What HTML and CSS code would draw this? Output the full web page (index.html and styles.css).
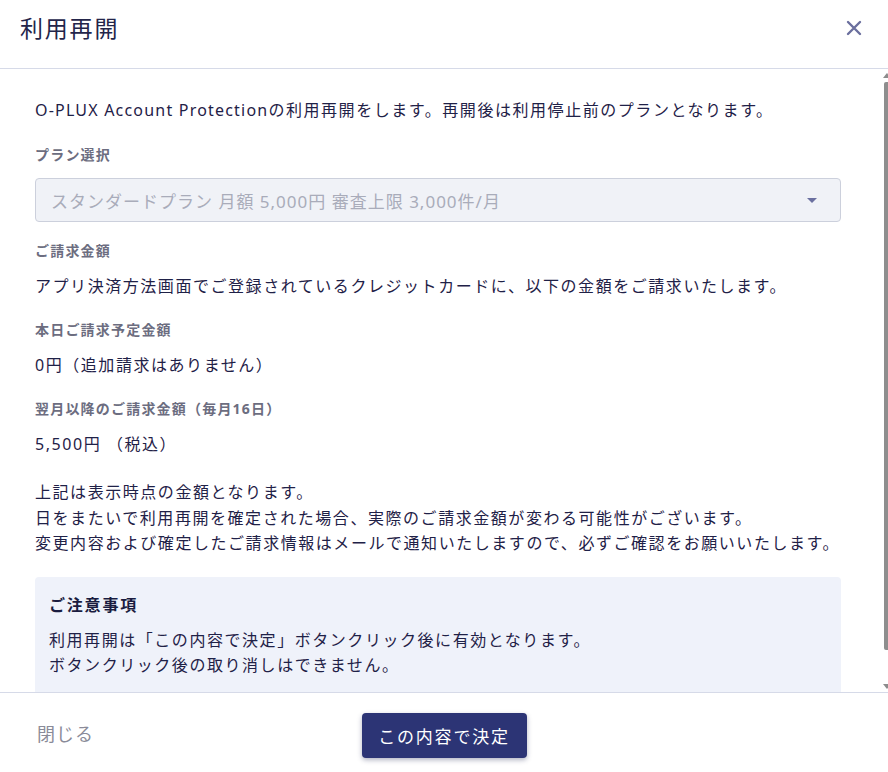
FILE: index.html
```html
<!DOCTYPE html>
<html lang="ja">
<head>
<meta charset="utf-8">
<title>利用再開</title>
<link rel="stylesheet" href="styles.css">
</head>
<body>
<div class="modal">
  <header class="modal-header">
    <h1 class="modal-title">利用再開</h1>
    <button class="close-btn" aria-label="閉じる">
      <svg width="16" height="16" viewBox="0 0 16 16"><path d="M2 2 L14 14 M14 2 L2 14" stroke="#6b6f9e" stroke-width="2.4" stroke-linecap="round"/></svg>
    </button>
  </header>
  <main class="modal-body">
    <p class="intro"><span class="latin">O-PLUX Account Protection</span>の利用再開をします。再開後は利用停止前のプランとなります。</p>
    <div class="label label-plan">プラン選択</div>
    <div class="select">
      <span class="select-text">スタンダードプラン 月額 5,000円 審査上限 3,000件/月</span>
      <span class="caret"></span>
    </div>
    <div class="label label-gap">ご請求金額</div>
    <p class="value">アプリ決済方法画面でご登録されているクレジットカードに、以下の金額をご請求いたします。</p>
    <div class="label label-gap">本日ご請求予定金額</div>
    <p class="value">0円（追加請求はありません）</p>
    <div class="label label-gap">翌月以降のご請求金額（毎月16日）</div>
    <p class="value">5,500円 （税込）</p>
    <p class="note">上記は表示時点の金額となります。<br>日をまたいで利用再開を確定された場合、実際のご請求金額が変わる可能性がございます。<br>変更内容および確定したご請求情報はメールで通知いたしますので、必ずご確認をお願いいたします。</p>
    <section class="notice">
      <h2 class="notice-title">ご注意事項</h2>
      <p class="notice-text">利用再開は「この内容で決定」ボタンクリック後に有効となります。<br>ボタンクリック後の取り消しはできません。</p>
    </section>
    <div class="scrollbar">
      <span class="sb-up"></span>
      <span class="sb-thumb"></span>
      <span class="sb-down"></span>
    </div>
  </main>
  <footer class="modal-footer">
    <a class="close-link">閉じる</a>
    <button class="primary-btn">この内容で決定</button>
    <span></span>
  </footer>
</div>
</body>
</html>
```
FILE: styles.css
```css
* { box-sizing: border-box; }
html, body {
  margin: 0;
  padding: 0;
  background: #ffffff;
}
body {
  font-family: "Noto Sans", "Noto Sans CJK JP", sans-serif;
  color: #1f2147;
  width: 888px;
  height: 772px;
  overflow: hidden;
}
.modal {
  width: 888px;
  height: 772px;
  display: flex;
  flex-direction: column;
}
.modal-header {
  height: 69px;
  padding: 12px 20px 0 20px;
  border-bottom: 1px solid #d6dae8;
  display: flex;
  align-items: flex-start;
  justify-content: space-between;
}
.modal-title {
  margin: 0;
  font-size: 23px;
  font-weight: 400;
  line-height: 32px;
  letter-spacing: 1.8px;
  color: #23254a;
}
.close-btn {
  border: 0;
  background: none;
  padding: 0;
  margin: 8px 6px 0 0;
  width: 16px;
  height: 16px;
  display: flex;
}
.modal-body {
  position: relative;
  height: 623px;
  overflow: hidden;
  padding: 28px 47px 0 35px;
  font-size: 16px;
  letter-spacing: 1.55px;
}
.intro {
  margin: 0;
  line-height: 26px;
}
.latin {
  letter-spacing: 1.2px;
}
.label {
  font-size: 14px;
  font-weight: 700;
  line-height: 20px;
  color: #6c6d80;
  letter-spacing: 1.2px;
}
.label-plan { margin-top: 22px; }
.label-gap { margin-top: 19px; }
.select {
  margin-top: 13px;
  height: 44px;
  background: #f0f2f7;
  border: 1px solid #ccd0dc;
  border-radius: 4px;
  display: flex;
  align-items: center;
  justify-content: space-between;
  padding: 0 23px 0 15px;
}
.select-text {
  color: #a9acba;
  font-size: 17px;
  letter-spacing: 1px;
}
.caret {
  width: 0;
  height: 0;
  border-left: 5px solid transparent;
  border-right: 5px solid transparent;
  border-top: 5px solid #6b70a0;
  margin-top: 1px;
}
.value {
  margin: 12px 0 0 0;
  line-height: 26px;
}
.label-gap + .value { margin-top: 12px; }
.value + .label-gap { margin-top: 21px; }
.note {
  margin: 23px 0 0 0;
  line-height: 25.5px;
}
.notice {
  margin-top: 20px;
  background: #eff2fa;
  border-radius: 4px;
  padding: 17px 14px 30px 14px;
}
.notice-title {
  margin: 0;
  font-size: 16px;
  font-weight: 700;
  line-height: 22px;
  color: #1a1c40;
  letter-spacing: 1.8px;
}
.notice-text {
  margin: 12px 0 0 0;
  line-height: 25px;
}
.scrollbar {
  position: absolute;
  right: 0;
  top: 4px;
  width: 4px;
  height: 616px;
  display: flex;
  flex-direction: column;
  align-items: flex-start;
}
.sb-up {
  width: 0;
  height: 0;
  border-left: 4px solid transparent;
  border-right: 4px solid transparent;
  border-bottom: 5px solid #8c8c8c;
  margin-left: -1px;
}
.sb-thumb {
  margin-top: 4px;
  width: 4px;
  height: 568px;
  background: #8e8e8e;
  border-radius: 2px 0 0 2px;
}
.sb-down {
  margin-top: auto;
  width: 0;
  height: 0;
  border-left: 4px solid transparent;
  border-right: 4px solid transparent;
  border-top: 5px solid #8c8c8c;
  margin-left: -1px;
}
.modal-footer {
  flex: 1;
  border-top: 1px solid #d6dae8;
  display: grid;
  grid-template-columns: 1fr auto 1fr;
  align-items: center;
  padding: 0 0 0 37px;
}
.close-link {
  font-size: 18px;
  color: #8a8b99;
  letter-spacing: 1px;
  justify-self: start;
}
.primary-btn {
  width: 165px;
  height: 45px;
  margin-left: -37px;
  margin-top: 5px;
  border: 0;
  border-radius: 4px;
  background: #2c3475;
  color: #ffffff;
  font-family: "Noto Sans", "Noto Sans CJK JP", sans-serif;
  font-size: 17px;
  letter-spacing: 1.8px;
  box-shadow: 0 2px 5px rgba(30, 35, 80, 0.35);
}
```
